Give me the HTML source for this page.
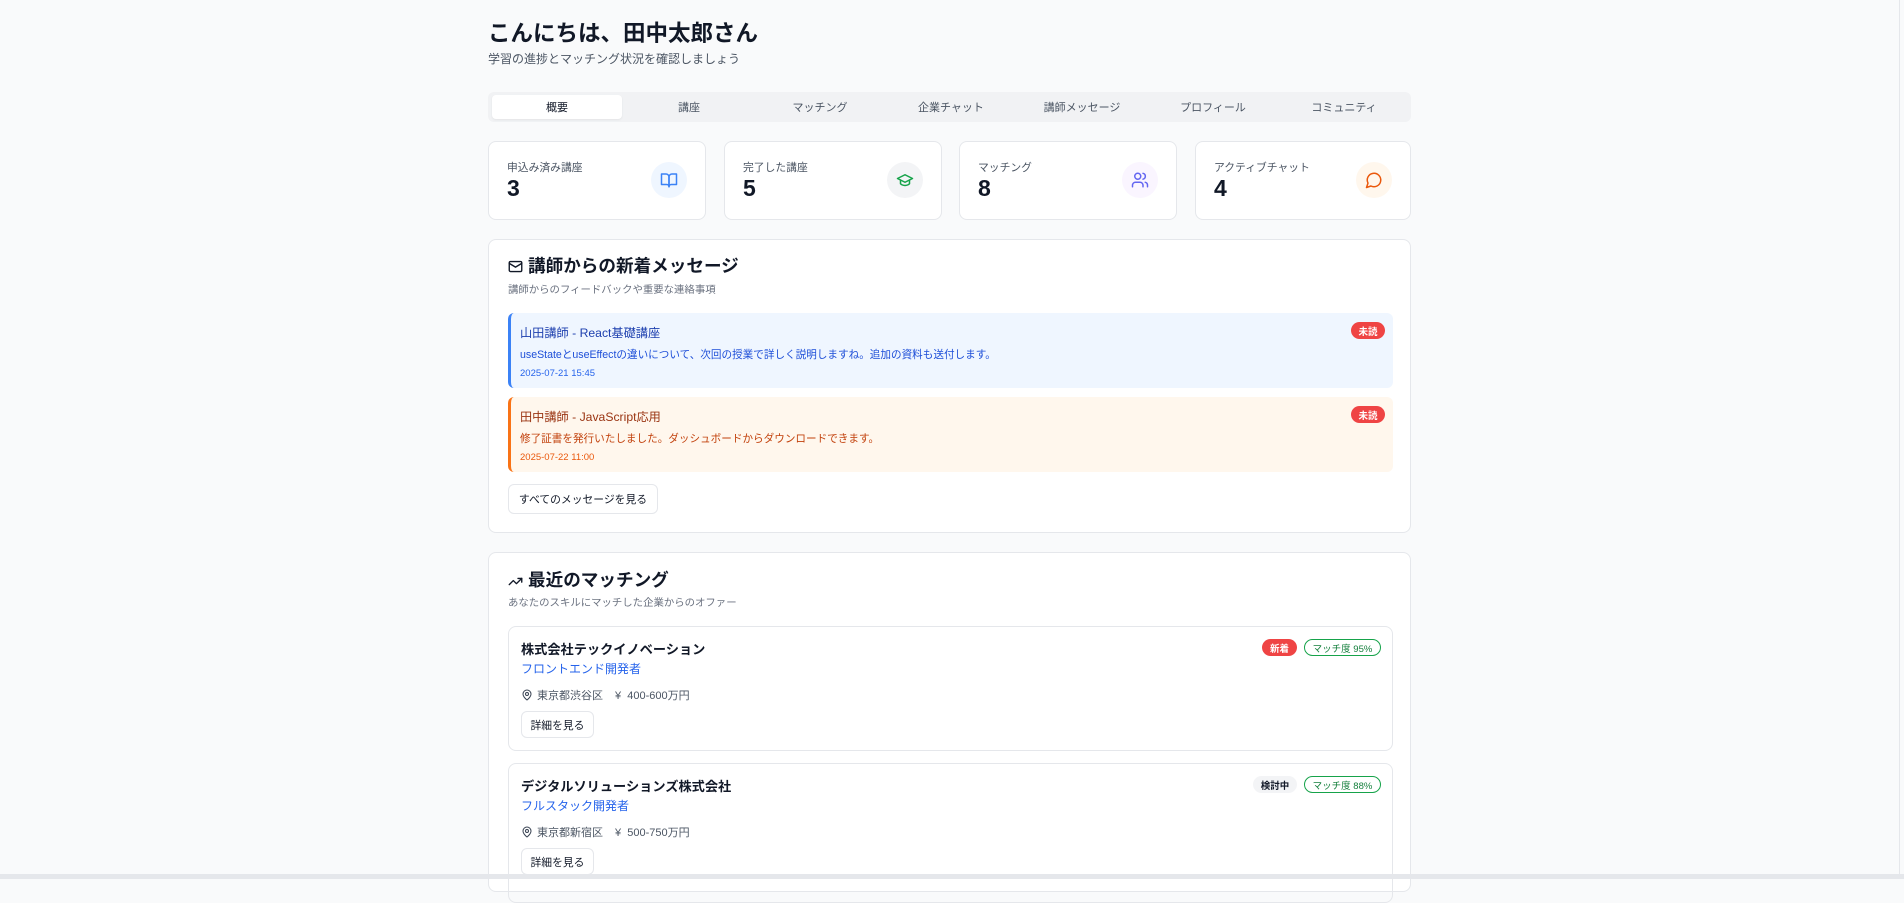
<!DOCTYPE html>
<html><head><meta charset="utf-8"><style>
*{box-sizing:border-box;margin:0;padding:0}
body{width:1904px;height:879px;overflow:hidden;background:#f9fafb;font-family:"Liberation Sans","Noto Sans CJK JP",sans-serif;color:#111827;position:relative}
.a{position:absolute}
.card{position:absolute;background:#fff;border:1px solid #e5e7eb;border-radius:8px}
.lbl{font-size:10.8px;color:#4b5563}
.num{font-size:23px;font-weight:700}
.ic{position:absolute;width:36px;height:36px;border-radius:50%;display:flex;align-items:center;justify-content:center}
.tab{position:absolute;top:3px;height:24px;width:130px;font-size:11px;color:#4b5563;display:flex;align-items:center;justify-content:center}
.badge{position:absolute;height:17px;border-radius:9px;font-size:9.5px;font-weight:700;display:flex;align-items:center;justify-content:center}
.btn{position:absolute;background:#fff;border:1px solid #e5e7eb;border-radius:6px;font-size:10.8px;display:flex;align-items:center;justify-content:center;color:#111827}
.loc{position:absolute;left:12px;top:60px;font-size:11px;color:#4b5563;display:flex;align-items:center;gap:4px}
</style></head><body>
<div class="a" style="left:488px;top:16px;font-size:22.5px;font-weight:700">こんにちは、田中太郎さん</div>
<div class="a" style="left:488px;top:50px;font-size:12px;color:#4b5563">学習の進捗とマッチング状況を確認しましょう</div>

<div class="a" style="left:488px;top:92px;width:923px;height:30px;background:#f1f2f4;border-radius:6px">
<div class="tab" style="left:4px;background:#fff;border-radius:4px;color:#111827;box-shadow:0 1px 2px rgba(0,0,0,.06)">概要</div>
<div class="tab" style="left:136px">講座</div>
<div class="tab" style="left:267px">マッチング</div>
<div class="tab" style="left:398px">企業チャット</div>
<div class="tab" style="left:529px">講師メッセージ</div>
<div class="tab" style="left:660px">プロフィール</div>
<div class="tab" style="left:791px">コミュニティ</div>
</div>

<div class="card" style="left:488px;top:141px;width:218px;height:79px"><div class="a lbl" style="left:18px;top:17px">申込み済み講座</div><div class="a num" style="left:18px;top:33px">3</div>
<div class="ic" style="left:162px;top:20px;background:#eff6ff"><svg width="18" height="18" viewBox="0 0 24 24" fill="none" stroke="#3b82f6" stroke-width="2" stroke-linecap="round" stroke-linejoin="round"><path d="M2 4h6a4 4 0 0 1 4 4v13a3 3 0 0 0-3-3H2z"/><path d="M22 4h-6a4 4 0 0 0-4 4v13a3 3 0 0 1 3-3h7z"/></svg></div></div>
<div class="card" style="left:724px;top:141px;width:218px;height:79px"><div class="a lbl" style="left:18px;top:17px">完了した講座</div><div class="a num" style="left:18px;top:33px">5</div>
<div class="ic" style="left:162px;top:20px;background:#f3f4f6"><svg width="18" height="18" viewBox="0 0 24 24" fill="none" stroke="#16a34a" stroke-width="2" stroke-linecap="round" stroke-linejoin="round"><path d="M22 10 12 5 2 10l10 5 10-5z"/><path d="M6 12v5c3 3 9 3 12 0v-5"/></svg></div></div>
<div class="card" style="left:959px;top:141px;width:218px;height:79px"><div class="a lbl" style="left:18px;top:17px">マッチング</div><div class="a num" style="left:18px;top:33px">8</div>
<div class="ic" style="left:162px;top:20px;background:#faf5ff"><svg width="18" height="18" viewBox="0 0 24 24" fill="none" stroke="#6366f1" stroke-width="2" stroke-linecap="round" stroke-linejoin="round"><path d="M16 21v-2a4 4 0 0 0-4-4H6a4 4 0 0 0-4 4v2"/><circle cx="9" cy="7" r="4"/><path d="M22 21v-2a4 4 0 0 0-3-3.9M16 3.1a4 4 0 0 1 0 7.8"/></svg></div></div>
<div class="card" style="left:1195px;top:141px;width:216px;height:79px"><div class="a lbl" style="left:18px;top:17px">アクティブチャット</div><div class="a num" style="left:18px;top:33px">4</div>
<div class="ic" style="left:160px;top:20px;background:#fff7ed"><svg width="18" height="18" viewBox="0 0 24 24" fill="none" stroke="#ea580c" stroke-width="2" stroke-linecap="round" stroke-linejoin="round"><path d="M7.9 20A9 9 0 1 0 4 16.1L2 22z"/></svg></div></div>

<div class="card" style="left:488px;top:239px;width:923px;height:294px">
<svg class="a" style="left:19px;top:19px" width="15" height="15" viewBox="0 0 24 24" fill="none" stroke="#111827" stroke-width="2.2" stroke-linecap="round" stroke-linejoin="round"><rect x="2" y="4" width="20" height="16" rx="2"/><path d="m22 7-10 6L2 7"/></svg>
<div class="a" style="left:39px;top:13px;font-size:17.6px;font-weight:700">講師からの新着メッセージ</div>
<div class="a" style="left:19px;top:41px;font-size:10.4px;color:#6b7280">講師からのフィードバックや重要な連絡事項</div>
<div class="a" style="left:19px;top:73px;width:885px;height:75px;background:#eff6ff;border-left:3px solid #3b82f6;border-radius:6px">
<div class="a" style="left:9px;top:10px;font-size:12.2px;color:#1e40af">山田講師 - React基礎講座</div>
<div class="a" style="left:9px;top:34px;font-size:10.6px;color:#1d4ed8">useStateとuseEffectの違いについて、次回の授業で詳しく説明しますね。追加の資料も送付します。</div>
<div class="a" style="left:9px;top:55px;font-size:9.5px;color:#2563eb">2025-07-21 15:45</div>
<div class="badge" style="right:8px;top:9px;width:34px;background:#ef4444;color:#fff">未読</div></div>
<div class="a" style="left:19px;top:157px;width:885px;height:75px;background:#fff7ed;border-left:3px solid #f97316;border-radius:6px">
<div class="a" style="left:9px;top:10px;font-size:12.2px;color:#9a3412">田中講師 - JavaScript応用</div>
<div class="a" style="left:9px;top:34px;font-size:10.6px;color:#c2410c">修了証書を発行いたしました。ダッシュボードからダウンロードできます。</div>
<div class="a" style="left:9px;top:55px;font-size:9.5px;color:#ea580c">2025-07-22 11:00</div>
<div class="badge" style="right:8px;top:9px;width:34px;background:#ef4444;color:#fff">未読</div></div>
<div class="btn" style="left:19px;top:244px;width:150px;height:30px">すべてのメッセージを見る</div>
</div>

<div class="card" style="left:488px;top:552px;width:923px;height:340px">
<svg class="a" style="left:19px;top:21px" width="15" height="15" viewBox="0 0 24 24" fill="none" stroke="#111827" stroke-width="2.2" stroke-linecap="round" stroke-linejoin="round"><path d="m22 7-8.5 8.5-5-5L2 17"/><path d="M16 7h6v6"/></svg>
<div class="a" style="left:39px;top:14px;font-size:17.6px;font-weight:700">最近のマッチング</div>
<div class="a" style="left:19px;top:41px;font-size:10.4px;color:#6b7280">あなたのスキルにマッチした企業からのオファー</div>
<div class="a" style="left:19px;top:73px;width:885px;height:125px;border:1px solid #e5e7eb;border-radius:8px">
<div class="a" style="left:12px;top:12px;font-size:13.2px;font-weight:700">株式会社テックイノベーション</div>
<div class="a" style="left:12px;top:33px;font-size:12px;color:#2563eb">フロントエンド開発者</div>
<div class="loc"><svg width="12" height="12" viewBox="0 0 24 24" fill="none" stroke="#374151" stroke-width="2"><path d="M20 10c0 6-8 12-8 12s-8-6-8-12a8 8 0 0 1 16 0z"/><circle cx="12" cy="10" r="3"/></svg>東京都渋谷区<span style="margin-left:8px">¥&nbsp; 400-600万円</span></div>
<div class="btn" style="left:12px;top:84px;width:73px;height:27px">詳細を見る</div>
<div class="badge" style="right:95px;top:12px;width:35px;background:#ef4444;color:#fff">新着</div>
<div class="badge" style="right:11px;top:12px;width:77px;border:1.5px solid #16a34a;color:#15803d;font-weight:400">マッチ度 95%</div></div>
<div class="a" style="left:19px;top:210px;width:885px;height:140px;border:1px solid #e5e7eb;border-radius:8px">
<div class="a" style="left:12px;top:12px;font-size:13.2px;font-weight:700">デジタルソリューションズ株式会社</div>
<div class="a" style="left:12px;top:33px;font-size:12px;color:#2563eb">フルスタック開発者</div>
<div class="loc"><svg width="12" height="12" viewBox="0 0 24 24" fill="none" stroke="#374151" stroke-width="2"><path d="M20 10c0 6-8 12-8 12s-8-6-8-12a8 8 0 0 1 16 0z"/><circle cx="12" cy="10" r="3"/></svg>東京都新宿区<span style="margin-left:8px">¥&nbsp; 500-750万円</span></div>
<div class="btn" style="left:12px;top:84px;width:73px;height:27px">詳細を見る</div>
<div class="badge" style="right:95px;top:12px;width:44px;background:#f3f4f6;color:#111827">検討中</div>
<div class="badge" style="right:11px;top:12px;width:77px;border:1.5px solid #16a34a;color:#15803d;font-weight:400">マッチ度 88%</div></div>
</div>
<div class="a" style="left:0;top:874px;width:1904px;height:5px;background:#e5e7eb"></div>
<div class="a" style="left:1899px;top:0;width:1px;height:874px;background:#e5e7eb"></div>
</body></html>
